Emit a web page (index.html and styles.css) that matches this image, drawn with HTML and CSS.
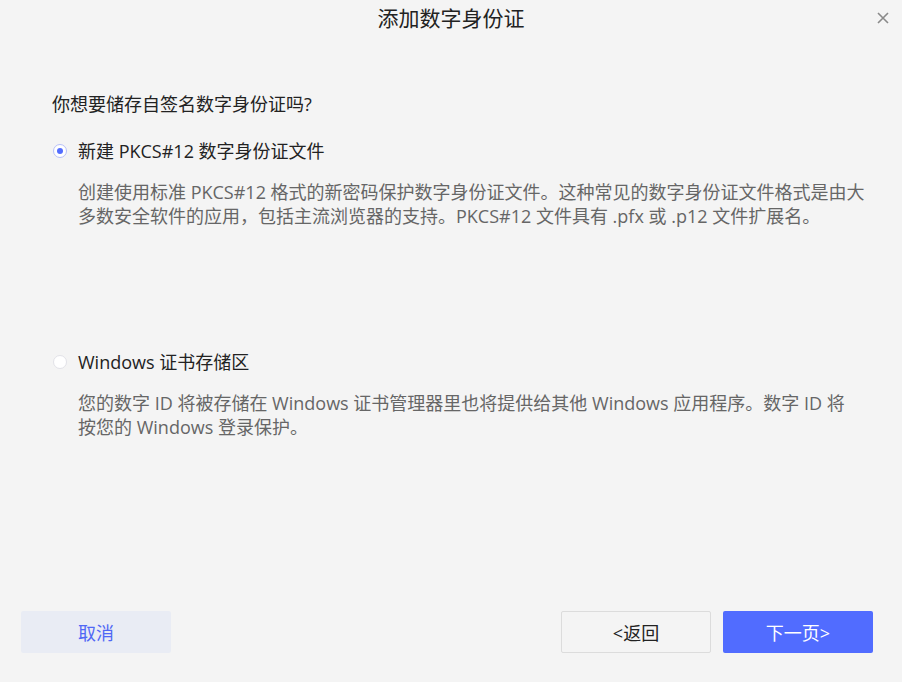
FILE: index.html
```html
<!DOCTYPE html>
<html lang="zh-CN">
<head>
<meta charset="utf-8">
<title>添加数字身份证</title>
<link rel="stylesheet" href="styles.css">
</head>
<body>
<div class="dialog">
  <header class="titlebar">
    <span class="title">添加数字身份证</span>
    <button class="close" aria-label="关闭">
      <svg width="12" height="12" viewBox="0 0 12 12"><path d="M1 1L11 11M11 1L1 11" stroke="#8a8a8a" stroke-width="1.6"/></svg>
    </button>
  </header>
  <main class="content">
    <p class="question">你想要储存自签名数字身份证吗?</p>
    <div class="option">
      <label class="opt-label"><span class="radio checked"></span>新建 PKCS#12 数字身份证文件</label>
      <p class="desc">创建使用标准 PKCS#12 格式的新密码保护数字身份证文件。这种常见的数字身份证文件格式是由大多数安全软件的应用，包括主流浏览器的支持。PKCS#12 文件具有 .pfx 或 .p12 文件扩展名。</p>
    </div>
    <div class="option second">
      <label class="opt-label"><span class="radio"></span>Windows 证书存储区</label>
      <p class="desc">您的数字 ID 将被存储在 Windows 证书管理器里也将提供给其他 Windows 应用程序。数字 ID 将<br>按您的 Windows 登录保护。</p>
    </div>
  </main>
  <footer class="footer">
    <button class="btn cancel">取消</button>
    <div class="right">
      <button class="btn back">&lt;返回</button>
      <button class="btn next">下一页&gt;</button>
    </div>
  </footer>
</div>
</body>
</html>
```
FILE: styles.css
```css
* { box-sizing: border-box; }
html, body { margin: 0; padding: 0; }
body {
  background: #f4f4f4;
  font-family: "Open Sans", "Noto Sans CJK SC", sans-serif;
  color: #222;
}
.dialog {
  width: 902px;
  height: 682px;
  display: flex;
  flex-direction: column;
}
.titlebar {
  height: 36px;
  position: relative;
  display: flex;
  align-items: center;
  justify-content: center;
}
.title { font-size: 21px; line-height: 28px; color: #222; }
.close {
  position: absolute;
  right: 13px;
  top: 12px;
  border: 0;
  background: none;
  padding: 0;
  width: 12px;
  height: 12px;
  display: flex;
}
.content {
  flex: 1;
  padding: 56px 0 0 52px;
}
.question { margin: 0; font-size: 18px; line-height: 24px; }
.option { margin-top: 23px; }
.option.second { margin-top: 122px; }
.opt-label {
  display: flex;
  align-items: center;
  font-size: 18px;
  line-height: 24px;
  color: #222;
}
.radio {
  width: 14px;
  height: 14px;
  border-radius: 50%;
  background: #fff;
  border: 1px solid #e2e2e8;
  margin: 0 11px 0 1px;
  position: relative;
  flex: none;
}
.radio.checked {
  border: 1px solid #b7c0f8;
  background: #fff;
}
.radio.checked::after {
  content: "";
  position: absolute;
  left: 3px; top: 3px;
  width: 6px; height: 6px;
  border-radius: 50%;
  background: #536dfe;
}
.desc {
  margin: 17px 0 0 26px;
  width: 792px;
  font-size: 18px;
  line-height: 24px;
  color: #666;
}
.footer {
  display: flex;
  justify-content: space-between;
  padding: 0 29px 29px 21px;
}
.right { display: flex; gap: 12px; }
.btn {
  width: 150px;
  height: 42px;
  font-family: inherit;
  font-size: 18px;
  border-radius: 2px;
  border: 1px solid transparent;
  cursor: pointer;
}
.cancel { background: #e9ecf4; color: #5068f5; }
.back { background: #f4f4f4; border-color: #dcdcdc; color: #222; }
.next { background: #516cff; color: #fff; }
```
